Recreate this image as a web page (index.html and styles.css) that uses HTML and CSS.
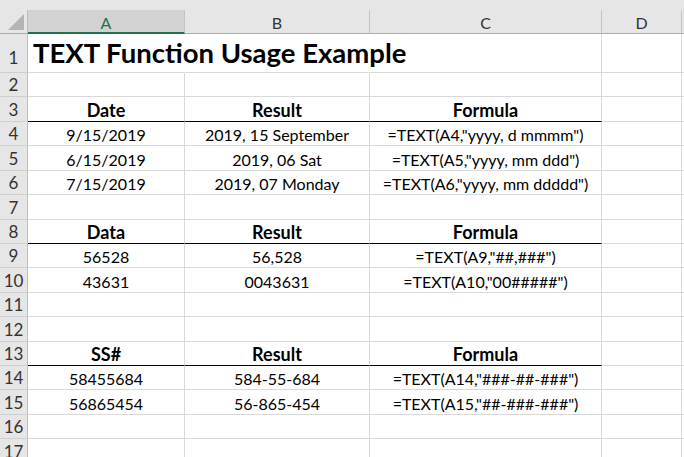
FILE: index.html
```html
<!DOCTYPE html>
<html>
<head>
<meta charset="utf-8">
<link rel="stylesheet" href="styles.css">
</head>
<body>
<div class="topstrip"></div>
<div class="sheet">
  <div class="corner"><svg class="tri" width="18" height="18" viewBox="0 0 18 18"><polygon points="17,1 17,17 1,17" fill="#b4b4b4"/></svg></div>
  <div class="ch sel">A</div>
  <div class="ch">B</div>
  <div class="ch">C</div>
  <div class="ch">D</div>
  <div class="ch"></div>

  <div class="rh r1">1</div>
  <div class="c title nr">TEXT Function Usage Example</div>
  <div class="c nr"></div>
  <div class="c"></div>
  <div class="c"></div>
  <div class="c"></div>

  <div class="rh">2</div><div class="c"></div><div class="c"></div><div class="c"></div><div class="c"></div><div class="c"></div>

  <div class="rh">3</div>
  <div class="c b ul">Date</div>
  <div class="c b ul">Result</div>
  <div class="c b ul">Formula</div>
  <div class="c"></div><div class="c"></div>

  <div class="rh">4</div>
  <div class="c">9/15/2019</div>
  <div class="c">2019, 15 September</div>
  <div class="c">=TEXT(A4,"yyyy, d mmmm")</div>
  <div class="c"></div><div class="c"></div>

  <div class="rh">5</div>
  <div class="c">6/15/2019</div>
  <div class="c">2019, 06 Sat</div>
  <div class="c">=TEXT(A5,"yyyy, mm ddd")</div>
  <div class="c"></div><div class="c"></div>

  <div class="rh">6</div>
  <div class="c">7/15/2019</div>
  <div class="c">2019, 07 Monday</div>
  <div class="c">=TEXT(A6,"yyyy, mm ddddd")</div>
  <div class="c"></div><div class="c"></div>

  <div class="rh">7</div><div class="c"></div><div class="c"></div><div class="c"></div><div class="c"></div><div class="c"></div>

  <div class="rh">8</div>
  <div class="c b ul">Data</div>
  <div class="c b ul">Result</div>
  <div class="c b ul">Formula</div>
  <div class="c"></div><div class="c"></div>

  <div class="rh">9</div>
  <div class="c">56528</div>
  <div class="c">56,528</div>
  <div class="c">=TEXT(A9,"##,###")</div>
  <div class="c"></div><div class="c"></div>

  <div class="rh">10</div>
  <div class="c">43631</div>
  <div class="c">0043631</div>
  <div class="c">=TEXT(A10,"00#####")</div>
  <div class="c"></div><div class="c"></div>

  <div class="rh">11</div><div class="c"></div><div class="c"></div><div class="c"></div><div class="c"></div><div class="c"></div>
  <div class="rh">12</div><div class="c"></div><div class="c"></div><div class="c"></div><div class="c"></div><div class="c"></div>

  <div class="rh">13</div>
  <div class="c b ul">SS#</div>
  <div class="c b ul">Result</div>
  <div class="c b ul">Formula</div>
  <div class="c"></div><div class="c"></div>

  <div class="rh">14</div>
  <div class="c">58455684</div>
  <div class="c">584-55-684</div>
  <div class="c">=TEXT(A14,"###-##-###")</div>
  <div class="c"></div><div class="c"></div>

  <div class="rh">15</div>
  <div class="c">56865454</div>
  <div class="c">56-865-454</div>
  <div class="c">=TEXT(A15,"##-###-###")</div>
  <div class="c"></div><div class="c"></div>

  <div class="rh">16</div><div class="c"></div><div class="c"></div><div class="c"></div><div class="c"></div><div class="c"></div>
  <div class="rh">17</div><div class="c"></div><div class="c"></div><div class="c"></div><div class="c"></div><div class="c"></div>
</div>
</body>
</html>
```

FILE: styles.css
```css
* { box-sizing: border-box; }
html, body { margin: 0; padding: 0; background: #fff; overflow: hidden; }
body { width: 684px; height: 457px; font-family: Lato, "Open Sans", sans-serif; color: #000; }

.topstrip { height: 10px; background: #e6e6e6; }

.sheet {
  display: grid;
  grid-template-columns: 28px 157px 185px 232px 80px 100px;
  grid-template-rows: 24px 39px repeat(16, 24.43px);
}

.corner {
  background: #e6e6e6;
  border-right: 1px solid #bdbdbd;
  border-bottom: 1px solid #ababab;
  display: flex;
  align-items: flex-end;
  justify-content: flex-end;
  padding: 0 2px 2px 0;
}
.tri { display: block; }

.ch {
  background: #e6e6e6;
  border-right: 1px solid #c4c4c4;
  border-bottom: 1px solid #ababab;
  display: flex;
  align-items: center;
  justify-content: center;
  font-size: 16px;
  color: #333;
  padding-top: 2px;
}
.ch.sel {
  background: #d2d2d2;
  color: #217346;
  border-bottom: 2px solid #217346;
}

.rh {
  background: #e6e6e6;
  border-right: 1px solid #bdbdbd;
  border-bottom: 1px solid #cfcfcf;
  display: flex;
  align-items: flex-end;
  justify-content: center;
  font-size: 17px;
  color: #333;
  padding-bottom: 1px;
}
.rh.r1 { padding-bottom: 4px; }

.c {
  border-right: 1px solid #d9d9d9;
  border-bottom: 1px solid #d9d9d9;
  display: flex;
  align-items: flex-end;
  justify-content: center;
  font-size: 16px;
  white-space: nowrap;
  padding-bottom: 1px;
  min-width: 0;
}
.c.b { font-weight: 700; font-size: 18px; padding-bottom: 0; }
.c.ul { border-bottom: 1px solid #000; }
.c.nr { border-right-color: transparent; }

.title {
  justify-content: flex-start;
  overflow: visible;
  font-weight: 700;
  font-size: 27.5px;
  padding-left: 5px;
  padding-bottom: 3px;
  position: relative;
  z-index: 1;
}
```
